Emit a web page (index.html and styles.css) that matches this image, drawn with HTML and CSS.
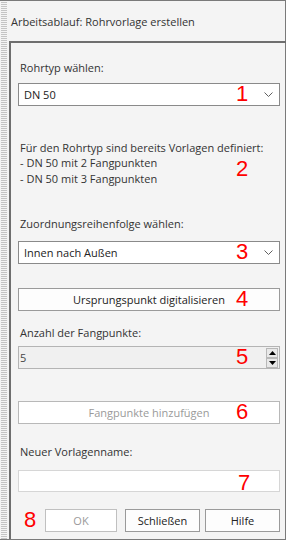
FILE: index.html
```html
<!DOCTYPE html>
<html lang="de">
<head>
<meta charset="utf-8">
<link rel="stylesheet" href="styles.css">
</head>
<body>
<div class="window">
  <div class="main">
    <div class="title">Arbeitsablauf: Rohrvorlage erstellen</div>
    <div class="panel">
      <div class="label l1">Rohrtyp wählen:</div>
      <div class="combo c1">
        <span class="val">DN 50</span>
        <span class="num">1</span>
        <svg class="chev" width="9" height="6" viewBox="0 0 9 6"><path d="M0.5 0.5 L4.5 4.5 L8.5 0.5" fill="none" stroke="#606060" stroke-width="1"/></svg>
      </div>
      <div class="info">
        <div>Für den Rohrtyp sind bereits Vorlagen definiert:</div>
        <div>- DN 50 mit 2 Fangpunkten</div>
        <div>- DN 50 mit 3 Fangpunkten</div>
        <span class="num n2">2</span>
      </div>
      <div class="label l2">Zuordnungsreihenfolge wählen:</div>
      <div class="combo c3">
        <span class="val">Innen nach Außen</span>
        <span class="num">3</span>
        <svg class="chev" width="9" height="6" viewBox="0 0 9 6"><path d="M0.5 0.5 L4.5 4.5 L8.5 0.5" fill="none" stroke="#606060" stroke-width="1"/></svg>
      </div>
      <div class="btn b4">Ursprungspunkt digitalisieren<span class="num">4</span></div>
      <div class="label l3">Anzahl der Fangpunkte:</div>
      <div class="spin">
        <span class="val">5</span>
        <span class="num">5</span>
        <div class="arrows">
          <div class="arr"><svg width="7" height="4" viewBox="0 0 7 4"><path d="M3.5 0 L7 4 L0 4 Z" fill="#000"/></svg></div>
          <div class="arr"><svg width="7" height="4" viewBox="0 0 7 4"><path d="M0 0 L7 0 L3.5 4 Z" fill="#000"/></svg></div>
        </div>
      </div>
      <div class="btn b6 disabled">Fangpunkte hinzufügen<span class="num">6</span></div>
      <div class="label l4">Neuer Vorlagenname:</div>
      <div class="input"><span class="num">7</span></div>
      <div class="footer">
        <span class="num8">8</span>
        <div class="fbtn ok disabled">OK</div>
        <div class="fbtn close">Schließen</div>
        <div class="fbtn help">Hilfe</div>
      </div>
    </div>
  </div>
</div>
</body>
</html>
```

FILE: styles.css
```css
* { box-sizing: border-box; }
html, body { margin: 0; padding: 0; }
body {
  width: 286px;
  height: 540px;
  font-family: "Open Sans", "Noto Sans", sans-serif;
  font-size: 11px;
  color: #333333;
  background: #f4f4f4;
}
.window {
  width: 286px;
  height: 540px;
  border: 1px solid #7a7a7a;
  border-left: none;
  display: flex;
  background: #f4f4f4;
}
.main {
  flex: 1;
  display: flex;
  flex-direction: column;
  position: relative;
}
.main::before {
  content: "";
  position: absolute;
  left: 1px;
  top: 0;
  bottom: 0;
  width: 6px;
  background: repeating-linear-gradient(to bottom, #f4f4f4 0, #f4f4f4 1px, #c4c4c4 1px, #c4c4c4 2px);
}
.title {
  height: 40px;
  padding-left: 11px;
  padding-top: 13px;
  font-size: 11px;
  line-height: 16px;
  color: #333;
}
.panel {
  flex: 1;
  margin-left: 9px;
  border-top: 2px solid #6e6e6e;
  border-left: 2px solid #6e6e6e;
  padding: 0 8px 0 7px;
  display: flex;
  flex-direction: column;
}
.label {
  line-height: 16px;
  padding-left: 2px;
  color: #333;
}
.l1 { margin-top: 17px; }
.combo, .spin, .input, .btn {
  position: relative;
  height: 23px;
  display: flex;
  align-items: center;
}
.combo {
  background: #fff;
  border: 1px solid #8a8a8a;
  padding-left: 5px;
  color: #222;
}
.c1 { margin-top: 7px; }
.chev {
  position: absolute;
  right: 6px;
  top: 8px;
}
.num {
  position: absolute;
  left: 217px;
  top: -2px;
  font-family: "Liberation Sans", Arial, sans-serif;
  font-size: 22px;
  line-height: 24px;
  color: #ff0000;
}
.info {
  position: relative;
  margin-top: 34px;
  line-height: 15.3px;
  padding-left: 2px;
  color: #333;
}
.num.n2 { left: 218px; top: 17px; }
.l2 { margin-top: 30px; }
.c3 { margin-top: 9px; }
.btn {
  margin-top: 24px;
  background: #fdfdfd;
  border: 1px solid #9a9a9a;
  justify-content: center;
  color: #222;
}
.l3 { margin-top: 14px; }
.spin {
  margin-top: 5px;
  background: #f0f0f0;
  border: 1px solid #b4b4b4;
  padding-left: 1px;
  color: #444;
}
.arrows {
  position: absolute;
  right: 1px;
  top: 1px;
  display: flex;
  flex-direction: column;
}
.arr {
  width: 12px;
  height: 10px;
  background: #e8e8e8;
  border: 1px solid #b8b8b8;
  display: flex;
  align-items: center;
  justify-content: center;
}
.b6 { margin-top: 32px; border-color: #b8b8b8; background: #fff; }
.disabled { color: #9a9a9a; }
.l4 { margin-top: 20px; }
.input {
  margin-top: 10px;
  height: 22px;
  background: #fff;
  border: 1px solid #d6d6d6;
}
.input .num { top: 0; left: 219px; }
.footer {
  margin-top: 17px;
  display: flex;
  align-items: center;
  height: 23px;
  position: relative;
}
.num8 {
  font-family: "Liberation Sans", Arial, sans-serif;
  font-size: 22px;
  line-height: 24px;
  color: #ff0000;
  width: 27px;
  padding-left: 6px;
}
.fbtn {
  height: 23px;
  border: 1px solid #9a9a9a;
  background: #fdfdfd;
  display: flex;
  align-items: center;
  justify-content: center;
  color: #222;
}
.ok { width: 72px; border-color: #c0c0c0; background: #fff; color: #9a9a9a; }
.close { width: 75px; margin-left: 8px; }
.help { width: 75px; margin-left: 5px; }
```
